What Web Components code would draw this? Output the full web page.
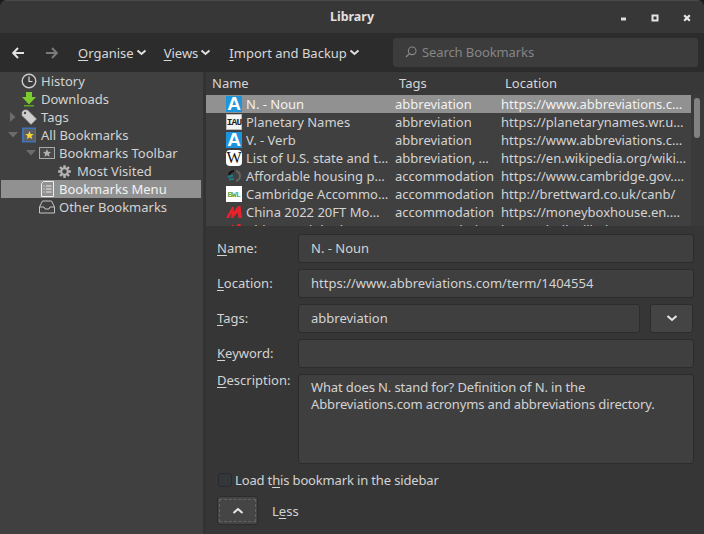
<!DOCTYPE html>
<html><head><meta charset="utf-8">
<style>
html,body{margin:0;padding:0;background:#1c1c1c;}
body{width:704px;height:534px;overflow:hidden;font:13px "Noto Sans","Open Sans",sans-serif;color:#d3d3d3;}
</style></head><body>
<template id="t-win"><style>
:host{display:flex;flex-direction:column;width:704px;height:534px;background:#363636;border-radius:7px 7px 0 0;overflow:hidden;box-sizing:border-box}
.main{flex:1;display:flex;min-height:0}
.side{width:203px;flex:none;background:#404040;border-right:0}
.split{width:3px;flex:none;background:#333}
.right{flex:1;display:flex;flex-direction:column;min-width:0}
</style><slot name="title"></slot><slot name="tool"></slot><div class="main"><div class="side"><slot name="side"></slot></div><div class="split"></div><div class="right"><slot name="list"></slot><slot name="detail"></slot></div></div></template>

<template id="t-title"><style>
:host{display:flex;height:33px;flex:none;align-items:center;justify-content:center;background:#373737;position:relative;font-weight:700;font-size:12.5px;color:#e0e0e0;border-top:1px solid #4a4a4a;box-sizing:border-box;padding-bottom:2px}
svg{position:absolute;top:13px}
</style><slot></slot>
<svg style="left:620px" width="8" height="8"><rect x="1" y="3.5" width="5" height="3" fill="#ddd"/></svg>
<svg style="left:651px" width="8" height="8"><rect x="1.5" y="1.5" width="5" height="5" fill="none" stroke="#e4e4e4" stroke-width="2"/></svg>
<svg style="left:683px" width="8" height="8"><path d="M1.2 1.2L6.8 6.8M6.8 1.2L1.2 6.8" stroke="#e8e8e8" stroke-width="2.2"/></svg>
</template>

<template id="t-tool"><style>
:host{display:flex;height:39px;flex:none;align-items:center;background:#2c2c2c;box-sizing:border-box;color:#d8d8d8}
.nav{width:12px;height:12px;display:block}
u{text-underline-offset:2px}
.m{display:flex;align-items:center;gap:2px}
.cv{width:11px;height:7px}
.s{margin-left:auto;margin-right:6px;width:305px;height:29px;background:#3c3c3c;border-radius:3px;display:flex;align-items:center;color:#858585;box-sizing:border-box;padding:0 0 2px 12px;gap:5px;letter-spacing:-.1px}
</style>
<svg class="nav" style="margin-left:12px" viewBox="0 0 12 12"><path d="M6 1L1.2 6L6 11M1.5 6H12" fill="none" stroke="#e2e2e2" stroke-width="2"/></svg>
<svg class="nav" style="margin-left:22px" viewBox="0 0 12 12"><path d="M6 1L10.8 6L6 11M10.5 6H0" fill="none" stroke="#7a7a7a" stroke-width="2"/></svg>
<span class="m" style="margin-left:20px"><span><u>O</u>rganise</span><svg class="cv" viewBox="0 0 11 7"><path d="M1.5 1.5L5.5 5L9.5 1.5" fill="none" stroke="#e0e0e0" stroke-width="2"/></svg></span>
<span class="m" style="margin-left:17px"><span><u>V</u>iews</span><svg class="cv" viewBox="0 0 11 7"><path d="M1.5 1.5L5.5 5L9.5 1.5" fill="none" stroke="#e0e0e0" stroke-width="2"/></svg></span>
<span class="m" style="margin-left:18px"><span><u>I</u>mport and Backup</span><svg class="cv" viewBox="0 0 11 7"><path d="M1.5 1.5L5.5 5L9.5 1.5" fill="none" stroke="#e0e0e0" stroke-width="2"/></svg></span>
<div class="s"><svg width="12" height="12" viewBox="0 0 12 12"><circle cx="7.2" cy="4.8" r="3.8" fill="none" stroke="#8a8a8a" stroke-width="1.1"/><path d="M4.4 7.6L1 11" stroke="#8a8a8a" stroke-width="1.2"/></svg><span>Search Bookmarks</span></div>
</template>

<template id="t-node"><style>
:host{display:flex;height:18px;align-items:center;white-space:nowrap;color:#d3d3d3;padding-left:calc(var(--i,0)*18px + 3px);margin:0 2px 0 1px;box-sizing:border-box}
:host([sel]){background:#919191;color:#f2f2f2}
.tw{width:17px;height:18px;flex:none;display:flex;align-items:center;justify-content:center}
.ic{width:18px;height:16px;flex:none;display:flex;align-items:center;justify-content:flex-start;margin-right:2px}
</style><span class="tw"><slot name="tw"></slot></span><span class="ic"><slot name="ic"></slot></span><slot></slot></template>

<template id="t-list"><style>
:host{display:block;height:154px;flex:none;background:#404040;position:relative;overflow:hidden}
.h{display:grid;grid-template-columns:187px 106px 1fr;height:23px;align-items:center;background:#383838;color:#d6d6d6;padding:0 0 2px 6px;box-sizing:border-box;position:relative}
.bar{position:absolute;right:0;top:23px;bottom:0;width:13px;background:#3a3a3a}
.th{position:absolute;right:4px;top:26px;width:6px;height:40px;border-radius:3px;background:#828282}
</style><div class="h"><span>Name</span><span>Tags</span><span>Location</span></div><slot></slot><div class="bar"></div><div class="th"></div></template>

<template id="t-row"><style>
:host{display:grid;grid-template-columns:189px 106px 190px;height:18px;align-items:center;white-space:nowrap;width:485px;color:#d3d3d3}
:host([sel]){background:#919191;color:#f2f2f2}
.n{display:flex;align-items:center;padding-left:20px;box-sizing:border-box;min-width:0}
.ic{width:16px;height:16px;flex:none;margin-right:4px;display:block}
</style><div class="n"><span class="ic"><slot name="ic"></slot></span><span><slot name="n"></slot></span></div><div><slot name="tg"></slot></div><div><slot name="u"></slot></div></template>

<template id="t-ico"><style>
:host{display:flex;width:16px;height:16px;align-items:center;justify-content:center;box-sizing:border-box;line-height:16px}
:host([k=a]){background:#1c95dd;color:#fff;font:700 19px/16px "Liberation Sans",sans-serif}
:host([k=iau]){background:#f4f4f4;border:1px solid #bbb;color:#222;font:700 9.5px "Liberation Mono",monospace;letter-spacing:-.9px}
:host([k=w]){background:#fff;color:#111;border-radius:4px;font:16px/16px "Liberation Serif",serif}
:host([k=bwl]){background:#fff;color:#0a8a0a;font:8px "Liberation Mono",monospace;letter-spacing:-.4px}
</style><slot></slot></template>

<template id="t-field"><style>
:host{display:flex;box-sizing:border-box;height:29px;background:#3f3f3f;border:1px solid #2c2c2c;border-radius:3px;padding:0 12px 2px;align-items:center;color:#d3d3d3;flex:1;min-width:0;white-space:pre-line}
:host([area]){height:90px;align-items:flex-start;padding-top:4px;line-height:17px;letter-spacing:-.125px}
:host([btn]){justify-content:center;padding:0;background:#444;flex:none}
</style><slot></slot></template>

<template id="t-detail"><style>
:host{display:flex;flex-direction:column;flex:1;box-sizing:border-box;padding:8px 10px 0 11px;background:#363636;min-height:0}
.r{display:flex;margin-bottom:6px;align-items:center}
.l{width:81px;flex:none;color:#d3d3d3;padding-bottom:2px}
u{text-underline-offset:2px}
.gap{width:10px;flex:none}
.ck{display:flex;align-items:center;margin-top:9px;height:14px;gap:3px;letter-spacing:-.15px}
.box{width:14px;height:14px;margin-left:1px;border-radius:3px;background:#33363b;border:1px solid #2a2a2a;box-sizing:border-box}
.less{display:flex;align-items:center;margin-top:9px}
.bt{width:41px;height:29px;border:1px solid #2c2c2c;border-radius:3px;background:#454545;box-sizing:border-box;padding:2px 1px}
.in{border:1px dashed #636363;height:100%;box-sizing:border-box;display:flex;align-items:center;justify-content:center}
</style>
<div class="r"><span class="l"><u>N</u>ame:</span><x-field>N. - Noun</x-field></div>
<div class="r"><span class="l"><u>L</u>ocation:</span><x-field>https://www.abbreviations.com/term/1404554</x-field></div>
<div class="r"><span class="l"><u>T</u>ags:</span><x-field style="flex:1">abbreviation</x-field><span class="gap"></span><x-field btn style="width:43px;margin-right:1px"><svg width="12" height="7" viewBox="0 0 12 7"><path d="M1.5 1L6 5L10.5 1" fill="none" stroke="#e8e8e8" stroke-width="2"/></svg></x-field></div>
<div class="r"><span class="l"><u>K</u>eyword:</span><x-field></x-field></div>
<div class="r" style="align-items:flex-start;margin-bottom:0"><span class="l" style="margin-top:-3px"><u>D</u>escription:</span><x-field area>What does N. stand for? Definition of N. in the
Abbreviations.com acronyms and abbreviations directory.</x-field></div>
<div class="ck"><span class="box"></span><span>Load t<u>h</u>is bookmark in the sidebar</span></div>
<div class="less"><div class="bt"><div class="in"><svg width="12" height="7" viewBox="0 0 12 7"><path d="M1.5 6L6 2L10.5 6" fill="none" stroke="#e8e8e8" stroke-width="2"/></svg></div></div><span style="margin-left:14px">L<u>e</u>ss</span></div>
</template>

<script>
for(const [n,t] of [['x-window','t-win'],['x-title','t-title'],['x-tool','t-tool'],['x-node','t-node'],['x-list','t-list'],['x-row','t-row'],['x-ico','t-ico'],['x-field','t-field'],['x-detail','t-detail']]){
 customElements.define(n,class extends HTMLElement{constructor(){super();this.attachShadow({mode:'open'}).appendChild(document.getElementById(t).content.cloneNode(true));}});
}
</script>

<x-window>
<x-title slot="title">Library</x-title>
<x-tool slot="tool"></x-tool>
<div slot="side">
<x-node style="--i:0"><svg slot="ic" width="16" height="16" viewBox="0 0 16 16"><circle cx="8" cy="8" r="6.8" fill="#3a3a3a" stroke="#ccc" stroke-width="1.4"/><path d="M8 3.5V8.5H11.5" fill="none" stroke="#ddd" stroke-width="1.2"/></svg>History</x-node>
<x-node style="--i:0"><svg slot="ic" width="16" height="16" viewBox="0 0 16 16"><path d="M5 1H11V6H15L8 13.5L1 6H5Z" fill="#7ccb2e"/><rect x="3" y="14" width="10" height="1.5" fill="#5da820"/></svg>Downloads</x-node>
<x-node style="--i:0"><svg slot="tw" width="6" height="10" viewBox="0 0 6 10"><path d="M0 0L5.5 5L0 10Z" fill="#6c6c6c"/></svg><svg slot="ic" width="16" height="16" viewBox="0 0 16 16"><path d="M1 3L3 1H6.5L15.5 10L10 15.5L1 6.5Z" fill="#cfcfcf" stroke="#9a9a9a" stroke-width=".6"/><circle cx="4" cy="4" r="1.2" fill="#4a4a4a"/></svg>Tags</x-node>
<x-node style="--i:0"><svg slot="tw" width="10" height="6" viewBox="0 0 10 6"><path d="M0 0L10 0L5 5.5Z" fill="#6c6c6c"/></svg><svg slot="ic" width="16" height="16" viewBox="0 0 16 16"><rect x="1" y="0.5" width="14" height="15" fill="#3f72b4"/><rect x="3" y="2" width="11" height="12" fill="#5b5f62"/><path d="M8.5 4L9.7 6.9L12.8 7.1L10.4 9.1L11.2 12L8.5 10.4L5.8 12L6.6 9.1L4.2 7.1L7.3 6.9Z" fill="#f2d33c"/></svg>All Bookmarks</x-node>
<x-node style="--i:1"><svg slot="tw" width="10" height="6" viewBox="0 0 10 6"><path d="M0 0L10 0L5 5.5Z" fill="#6c6c6c"/></svg><svg slot="ic" width="16" height="12" viewBox="0 0 16 12"><rect x=".5" y=".5" width="15" height="11" fill="#484848" stroke="#aaa"/><path d="M8 2L9.2 4.7L12 5L9.9 6.9L10.5 9.7L8 8.2L5.5 9.7L6.1 6.9L4 5L6.8 4.7Z" fill="#b0b0b0"/></svg>Bookmarks Toolbar</x-node>
<x-node style="--i:2"><svg slot="ic" width="15" height="15" viewBox="0 0 16 16"><path d="M8 1.2V14.8M1.2 8H14.8M3.2 3.2L12.8 12.8M12.8 3.2L3.2 12.8" stroke="#b4b4b4" stroke-width="2.6"/><circle cx="8" cy="8" r="3.6" fill="none" stroke="#b4b4b4" stroke-width="2"/><circle cx="8" cy="8" r="2.4" fill="#404040"/></svg>Most Visited</x-node>
<x-node sel style="--i:1"><svg slot="ic" width="16" height="16" viewBox="0 0 16 16"><path d="M2.5 2.5L4.5 .5H14.5V15.5H2.5Z" fill="none" stroke="#eee"/><path d="M4.5 5H5.5M7 5H12.5M4.5 8H5.5M7 8H12.5M4.5 11H5.5M7 11H12.5" stroke="#eee" stroke-width="1.2"/></svg>Bookmarks Menu</x-node>
<x-node style="--i:1"><svg slot="ic" width="16" height="14" viewBox="0 0 16 14"><path d="M3.5 1H12.5L15.5 7V13H.5V7ZM.5 7H5L6 9H10L11 7H15.5" fill="none" stroke="#c4c4c4"/></svg>Other Bookmarks</x-node>
</div>
<x-list slot="list">
<x-row sel><x-ico slot="ic" k="a">A</x-ico><span slot="n">N. - Noun</span><span slot="tg">abbreviation</span><span slot="u">https://www.abbreviations.c…</span></x-row>
<x-row><x-ico slot="ic" k="iau">IAU</x-ico><span slot="n">Planetary Names</span><span slot="tg">abbreviation</span><span slot="u">https://planetarynames.wr.u…</span></x-row>
<x-row><x-ico slot="ic" k="a">A</x-ico><span slot="n">V. - Verb</span><span slot="tg">abbreviation</span><span slot="u">https://www.abbreviations.c…</span></x-row>
<x-row><x-ico slot="ic" k="w">W</x-ico><span slot="n">List of U.S. state and t…</span><span slot="tg">abbreviation, …</span><span slot="u">https://en.wikipedia.org/wiki…</span></x-row>
<x-row><svg slot="ic" width="16" height="16" viewBox="0 0 16 16"><path d="M3 7A5.5 5.5 0 0 1 8 3" fill="none" stroke="#111" stroke-width="2"/><path d="M10 3A5.5 5.5 0 0 1 14 8A5.5 5.5 0 0 1 10 13" fill="none" stroke="#666" stroke-width="2"/><path d="M2 9L7 7.5M3 11.5L8 11" stroke="#1a7f8c" stroke-width="2"/></svg><span slot="n">Affordable housing p…</span><span slot="tg">accommodation</span><span slot="u">https://www.cambridge.gov.…</span></x-row>
<x-row><x-ico slot="ic" k="bwl">BWL</x-ico><span slot="n">Cambridge Accommo…</span><span slot="tg">accommodation</span><span slot="u">http://brettward.co.uk/canb/</span></x-row>
<x-row><svg slot="ic" width="16" height="16" viewBox="0 0 16 16"><path d="M0 14L6 3H8L7.5 8L12 2H14.5L16 14H12.5L11.5 8.5L7 14H5L5.5 9L3 14Z" fill="#e8222a"/></svg><span slot="n">China 2022 20FT Mo…</span><span slot="tg">accommodation</span><span slot="u">https://moneyboxhouse.en.…</span></x-row>
<x-row><svg slot="ic" width="16" height="16" viewBox="0 0 16 16"><path d="M0 14L6 3H8L7.5 8L12 2H14.5L16 14H12.5L11.5 8.5L7 14H5L5.5 9L3 14Z" fill="#e8222a"/></svg><span slot="n">China modular home…</span><span slot="tg">accommodation</span><span slot="u">https://bulk.alibaba.com/mo…</span></x-row>
</x-list>
<x-detail slot="detail"></x-detail>
</x-window>
</body></html>
